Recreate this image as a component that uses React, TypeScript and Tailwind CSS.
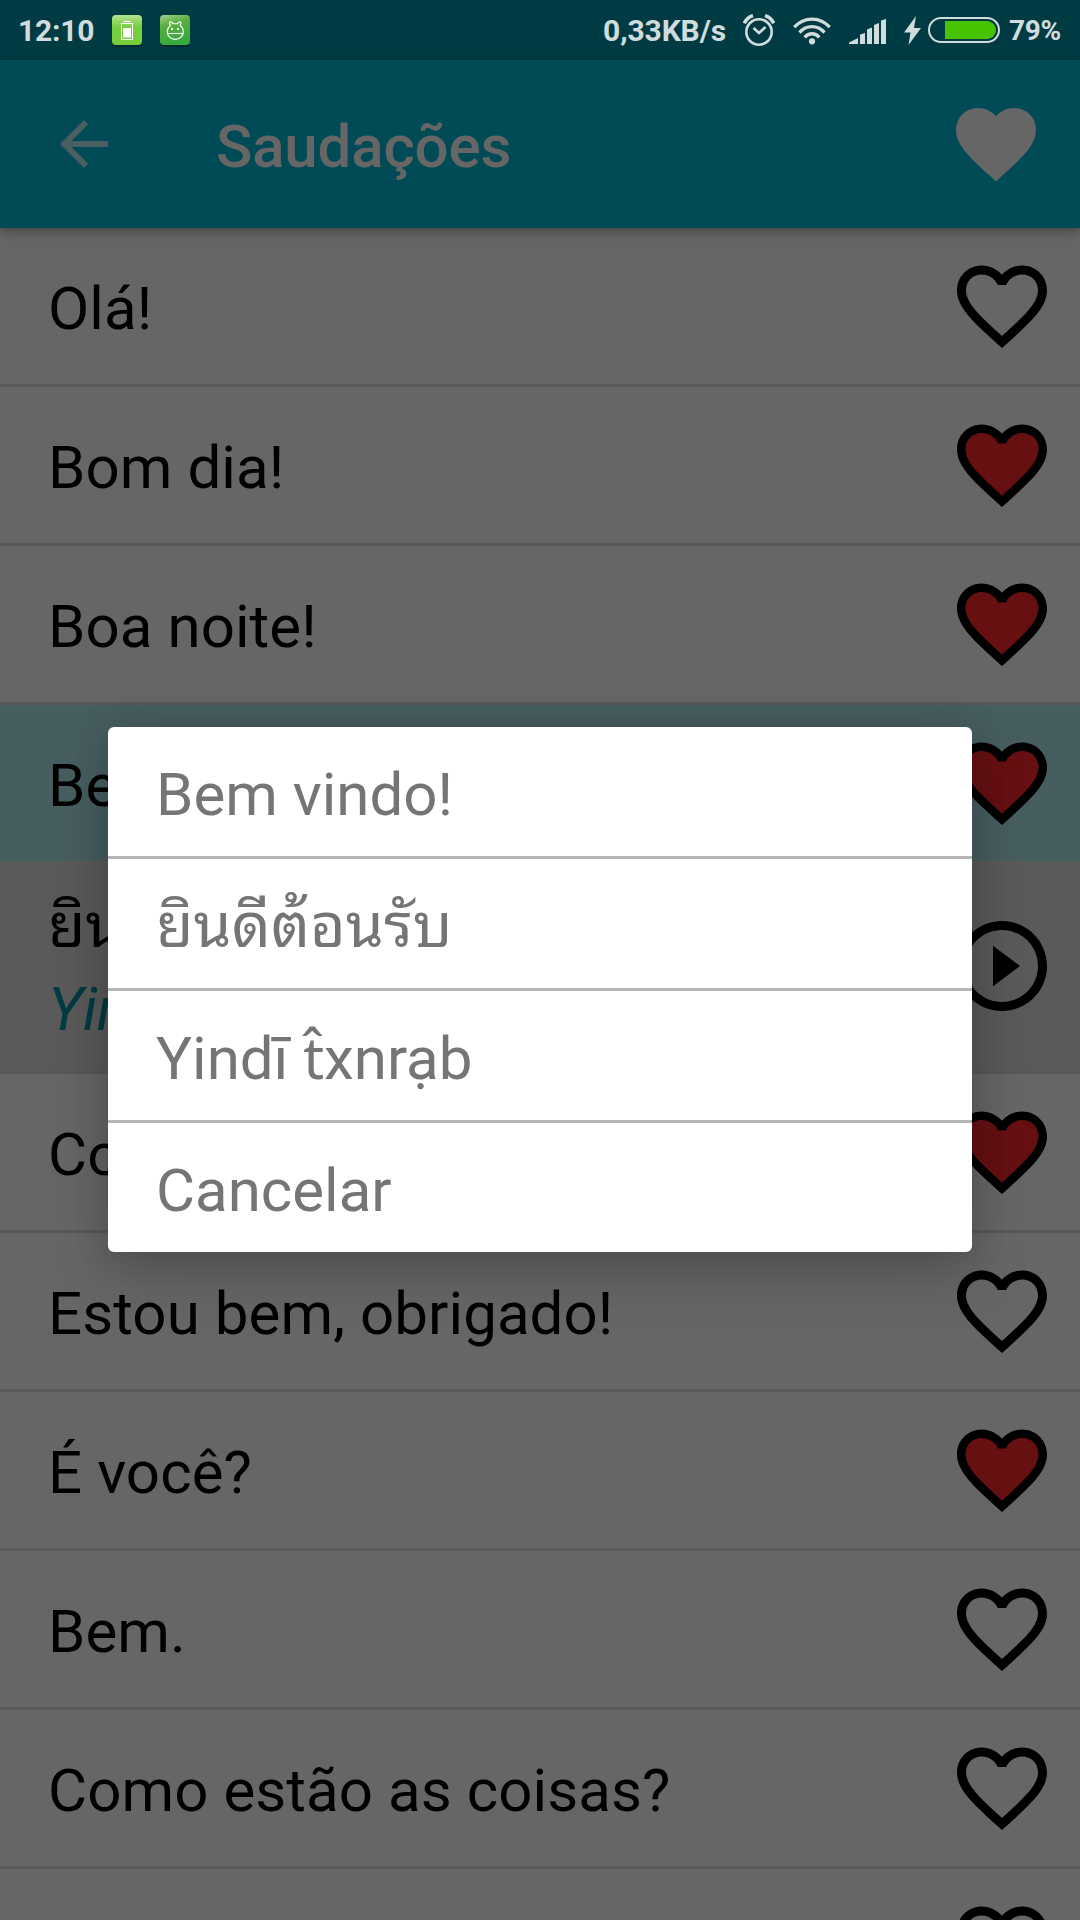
import React from 'react';
import clsx from 'clsx';

type Phrase = {
  text?: string;
  favorite: boolean;
  translation?: React.ReactNode;
  romanized?: React.ReactNode;
};

// Noto Sans centres the circumflex over the t, Roboto does not
const Romanized = () => (
  <span>
    Yindī <span className="font-['Noto_Sans',sans-serif] text-[58px] tracking-[-0.3px]">{'t\u0302'}</span>xnrạb
  </span>
);

const Thai = () => (
  <span className="relative -top-[7px] font-['Noto_Sans_Thai_Looped','Noto_Looped_Thai',Loma,Waree,Umpush,Garuda,FreeSans,'Noto_Sans_Thai',sans-serif] text-[61px] tracking-[0.15px]">
    ยินดีต้อนรับ
  </span>
);

const phrases: Phrase[] = [
  { text: 'Olá!', favorite: false },
  { text: 'Bom dia!', favorite: true },
  { text: 'Boa noite!', favorite: true },
  { text: 'Bem vindo!', favorite: true, translation: <Thai />, romanized: <Romanized /> },
  { text: 'Como vai você?', favorite: true },
  { text: 'Estou bem, obrigado!', favorite: false },
  { text: 'É você?', favorite: true },
  { text: 'Bem.', favorite: false },
  { text: 'Como estão as coisas?', favorite: false },
  { favorite: false },
];

const menuItems: React.ReactNode[] = ['Bem vindo!', <Thai />, <Romanized />, 'Cancelar'];

const HEART =
  'M12 21.35l-1.45-1.32C5.4 15.36 2 12.27 2 8.5 2 5.41 4.42 3 7.5 3c1.74 0 3.41.81 4.5 2.08C13.09 3.81 14.76 3 16.5 3 19.58 3 22 5.41 22 8.5c0 3.77-3.4 6.86-8.55 11.53L12 21.35z';
const HEART_INNER =
  'M12.1 18.55l-.1.1-.11-.1C7.14 14.24 4 11.39 4 8.5 4 6.5 5.5 5 7.5 5c1.54 0 3.04 1 3.57 2.36h1.86C13.46 6 14.96 5 16.5 5c2 0 3.5 1.5 3.5 3.5 0 2.89-3.14 5.74-7.9 10.05z';

const FavoriteIcon = ({ filled }: { filled: boolean }) => (
  <svg viewBox="0 0 24 24" className="ml-auto size-[108px] shrink-0">
    {filled ? (
      <>
        <path d={HEART} fill="#000" />
        <path d={HEART_INNER} fill="#661012" stroke="#661012" strokeWidth="0.25" />
      </>
    ) : (
      <path d={`${HEART} ${HEART_INNER}`} fill="#000" fillRule="evenodd" />
    )}
  </svg>
);

const StatusBar = () => (
  <div className="flex h-[60px] shrink-0 items-center bg-[#003b43] pl-[18px] pr-[19px] text-[30px] font-bold leading-none tracking-[-0.2px] text-[#d0dcdd]">
    <span className="w-[76px] pt-[2px]">12:10</span>
    <svg viewBox="0 0 30 34" className="ml-[18px] mt-1 h-[34px] w-[30px]">
      <defs>
        <linearGradient id="green-a" x1="0" y1="0" x2="0" y2="1">
          <stop offset="0" stopColor="#b3e394" />
          <stop offset="0.4" stopColor="#78cf3e" />
          <stop offset="1" stopColor="#74cf3a" />
        </linearGradient>
      </defs>
      <rect y="2" width="30" height="30" rx="4" fill="#002a2f" />
      <rect width="30" height="30" rx="4" fill="url(#green-a)" />
      <path d="M11.5 6.5h7" stroke="#fff" strokeWidth="1.2" />
      <rect x="9.5" y="8.5" width="11" height="16" fill="none" stroke="#fff" strokeWidth="1" />
      <rect x="11" y="13" width="8" height="9.5" fill="#fff" />
    </svg>
    <svg viewBox="0 0 30 34" className="ml-[18px] mt-1 h-[34px] w-[30px]">
      <defs>
        <linearGradient id="green-b" x1="0" y1="0" x2="0.3" y2="1">
          <stop offset="0" stopColor="#a5cf93" />
          <stop offset="0.4" stopColor="#55b03a" />
          <stop offset="1" stopColor="#38a93e" />
        </linearGradient>
      </defs>
      <rect y="2" width="30" height="30" rx="4" fill="#002a2f" />
      <rect width="30" height="30" rx="4" fill="url(#green-b)" />
      <g fill="none" stroke="#fff" strokeWidth="1.1">
        <path d="M12.8 8.700h5c0-2 2.800-2.300 3.200-.9.3 1.200-.3 1.900-.9 2.600 1.900 1.600 3.300 3.500 3.300 6 0 4.500-3.600 8-8.100 8s-8.100-3.500-8.100-8c0-2.500 1.400-4.400 3.300-6-.6-.7-1.200-1.400-.9-2.600.4-1.400 3.200-1.100 3.200.9z" />
        <path d="M7.300 18.500h16" />
      </g>
      <path d="M11 13h2v2h-2zM17 13h2v2h-2z" fill="#fff" />
    </svg>

    <div className="ml-auto flex items-center">
      <span className="pt-[2px] tracking-[-0.1px]">0,33KB/s</span>
      <svg viewBox="0 0 32 32" className="ml-[17px] h-8 w-8" fill="none" stroke="currentColor">
        <circle cx="16" cy="18" r="12.700" strokeWidth="2.600" />
        <path d="M10.500 14l5.500 5 6.500-6" strokeWidth="2.600" />
        <path d="M1.300 9.300C3 5.600 6 2.900 10 1.600M30.700 9.300C29 5.600 26 2.900 22 1.600" strokeWidth="3.600" />
      </svg>
      <svg viewBox="0 0 38 28" className="ml-[18px] mt-px h-7 w-[38px]" fill="none" stroke="currentColor" strokeWidth="3.400">
        <path d="M1.200 10.200C11-.6 27-.6 36.800 10.200" />
        <path d="M6.500 15.500c7-7.800 18-7.800 25 0" />
        <path d="M11.700 20.300c4.300-4.700 10.300-4.700 14.600 0" />
        <circle cx="19" cy="24.300" r="3.100" fill="currentColor" stroke="none" />
      </svg>
      <svg viewBox="0 0 37 25" className="ml-[18px] mt-[2px] h-[25px] w-[37px]" fill="currentColor">
        <path d="M0 25v-1.500L9 19v6zM11 25V15.500L16 14v11zM18 25V10.500L23 8.500V25zM25 25V6l5-2v21zM32 25V1.500L37 0v25z" />
      </svg>
      <svg viewBox="0 0 17 29" className="ml-[18px] mt-px h-[29px] w-[17px]" fill="currentColor">
        <path d="M12 0L0 16.500h6.500L4.500 29 17 12h-7z" />
      </svg>
      <svg viewBox="0 0 72 26" className="ml-[7px] h-[26px] w-[72px]">
        <rect x="1" y="1" width="70" height="24" rx="12" fill="none" stroke="currentColor" strokeWidth="2" />
        <path d="M17 4h42a9 9 0 0 1 0 18H17z" fill="#46c400" />
      </svg>
      <span className="ml-[9px] w-[52px] pt-[2px] text-[28px] tracking-[-0.3px]">79%</span>
    </div>
  </div>
);

const Toolbar = () => (
  <header className="relative z-10 flex h-[168px] shrink-0 items-center bg-[#004b56] pl-12 pr-9 shadow-[0_3px_12px_rgba(0,0,0,0.35)]">
    <svg viewBox="0 0 24 24" className="size-[72px] fill-[#4a5f62]">
      <path d="M20 11H7.830l5.590-5.590L12 4l-8 8 8 8 1.410-1.410L7.830 13H20v-2z" />
    </svg>
    <h1 className="ml-24 pt-[5px] text-[60px] font-medium leading-none tracking-[-0.15px] text-[#666]">Saudações</h1>
    <svg viewBox="0 0 24 24" className="ml-auto size-24 fill-[#666]">
      <path d={HEART} />
    </svg>
  </header>
);

const PhraseRow = ({ phrase }: { phrase: Phrase }) => {
  const expanded = Boolean(phrase.translation);

  return (
    <li className="shrink-0">
      <div
        className={clsx(
          'flex items-center pl-12 pr-6',
          expanded ? 'h-[156px] bg-[#475e61]' : 'h-[159px] border-b-[3px] border-[#595959]'
        )}
      >
        {phrase.text && <span className="pt-[5px] tracking-[0.08px]">{phrase.text}</span>}
        <FavoriteIcon filled={phrase.favorite} />
      </div>
      {expanded && (
        <div className="flex h-[213px] items-center justify-between border-b-[3px] border-[#575757] bg-[#5a5a5a] pl-12 pr-6">
          <div className="flex flex-col pt-[4px]">
            <div className="flex h-[83px] items-center">{phrase.translation}</div>
            <div className="flex h-[83px] items-center italic text-[#003b43]">{phrase.romanized}</div>
          </div>
          <svg viewBox="0 0 24 24" className="size-[108px]">
            <path d="M10 16.500l6-4.500-6-4.500v9zM12 2C6.480 2 2 6.480 2 12s4.480 10 10 10 10-4.480 10-10S17.520 2 12 2zm0 18c-4.410 0-8-3.590-8-8s3.590-8 8-8 8 3.590 8 8-3.590 8-8 8z" />
          </svg>
        </div>
      )}
    </li>
  );
};

const OptionsDialog = () => (
  <div className="absolute left-[108px] top-[727px] z-20 w-[864px] rounded-md bg-white shadow-[0_24px_60px_rgba(0,0,0,0.18),0_0_36px_rgba(0,0,0,0.14)]">
    <ul className="divide-y-[3px] divide-[#b5b5b5] text-[#757575]">
      {menuItems.map((item, index) => (
        <li
          key={index}
          className={clsx('flex items-center pl-12 pt-[6px]', index < menuItems.length - 1 ? 'h-[132px]' : 'h-[129px]')}
        >
          {item}
        </li>
      ))}
    </ul>
  </div>
);

const App = () => (
  <div className="relative flex h-[1920px] w-[1080px] flex-col overflow-hidden bg-[#666] font-[Roboto,'Noto_Sans',sans-serif] text-[60px] leading-none text-black">
    <StatusBar />
    <Toolbar />
    <ul className="flex flex-col">
      {phrases.map((phrase, index) => (
        <PhraseRow key={index} phrase={phrase} />
      ))}
    </ul>
    <OptionsDialog />
  </div>
);

export default App;
